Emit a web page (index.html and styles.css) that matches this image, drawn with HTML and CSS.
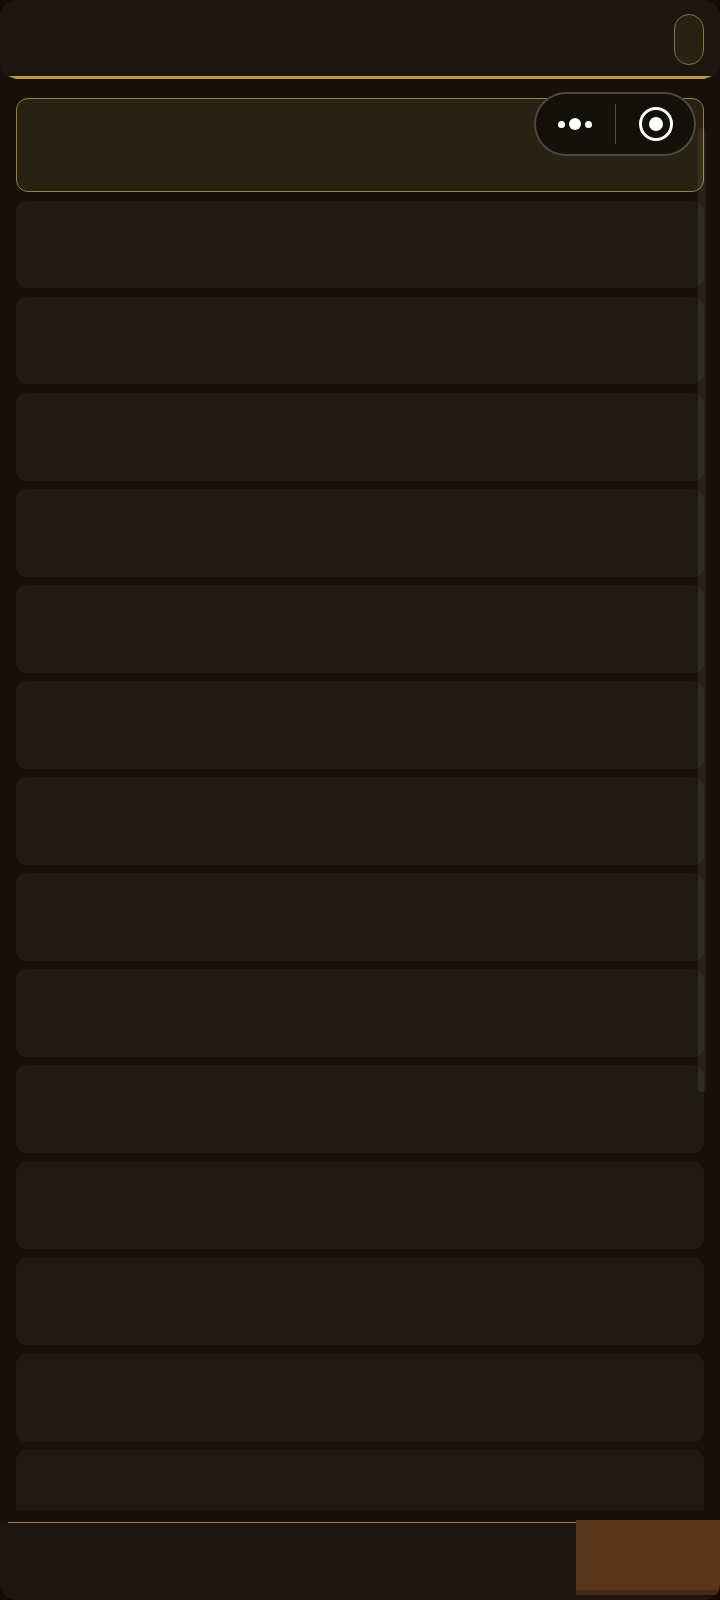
FILE: index.html
```html
<!DOCTYPE html>
<html lang="en">
<head>
    <meta charset="UTF-8">
    <meta name="viewport" content="width=device-width, initial-scale=1.0">
    <title>List</title>
    <link rel="stylesheet" href="styles.css">
</head>
<body>
<div class="page">
    <header class="top-bar">
        <div class="top-toggle"></div>
    </header>

    <div class="capsule">
        <div class="capsule-more">
            <span class="dot"></span>
            <span class="dot dot-large"></span>
            <span class="dot"></span>
        </div>
        <div class="capsule-divider"></div>
        <div class="capsule-close">
            <span class="close-inner"></span>
        </div>
    </div>

    <main class="list">
        <div class="card card-active"></div>
        <div class="card"></div>
        <div class="card"></div>
        <div class="card"></div>
        <div class="card"></div>
        <div class="card"></div>
        <div class="card"></div>
        <div class="card"></div>
        <div class="card"></div>
        <div class="card"></div>
        <div class="card"></div>
        <div class="card"></div>
        <div class="card"></div>
        <div class="card"></div>
        <div class="card"></div>
        <div class="scroll-thumb"></div>
    </main>

    <footer class="bottom-bar">
        <div class="bottom-action"></div>
    </footer>
</div>
</body>
</html>
```

FILE: styles.css
```css
:root {
    --page: #19100b;
    --bar: #1d1610;
    --card: #201b15;
    --card-active: #282214;
    --gold: #bc9a40;
    --gold-soft: #9c8138;
    --action: #5a3519;
}

* {
    margin: 0;
    padding: 0;
    box-sizing: border-box;
}

body {
    background-color: #0f0c09;
    width: 720px;
    height: 1600px;
    overflow: hidden;
}

.page {
    position: relative;
    display: flex;
    flex-direction: column;
    height: 1600px;
    background-color: var(--page);
    border-radius: 16px;
    overflow: hidden;
}

.top-bar {
    position: relative;
    display: flex;
    justify-content: flex-end;
    align-items: flex-start;
    flex-shrink: 0;
    height: 79px;
    padding: 14px 16px 0 0;
    background-color: var(--bar);
    border-radius: 0 0 16px 16px;
}

/* gold rule under the bar, pointed at both ends */
.top-bar::after {
    content: "";
    position: absolute;
    left: 8px;
    right: 8px;
    bottom: 0;
    height: 3px;
    background-color: var(--gold);
    clip-path: polygon(0 0, 100% 0, calc(100% - 8px) 100%, 8px 100%);
}

.top-toggle {
    width: 30px;
    height: 51px;
    background-color: #2a2114;
    border: 1.5px solid #8f7433;
    border-radius: 15px;
}

.capsule {
    position: absolute;
    top: 92px;
    left: 534px;
    z-index: 2;
    display: flex;
    align-items: center;
    width: 162px;
    height: 64px;
    background-color: #14100a;
    border: 2px solid rgba(226, 216, 190, 0.28);
    border-radius: 32px;
}

.capsule-more {
    display: flex;
    justify-content: center;
    align-items: center;
    gap: 4px;
    width: 77px;
    margin-right: 2px;
}

.dot {
    width: 7px;
    height: 7px;
    background-color: #fff;
    border-radius: 50%;
}

.dot-large {
    width: 12px;
    height: 12px;
}

.capsule-divider {
    width: 1px;
    height: 40px;
    background-color: rgba(255, 255, 255, 0.25);
}

.capsule-close {
    display: flex;
    justify-content: center;
    align-items: center;
    width: 34px;
    height: 34px;
    margin-left: 23px;
    border: 3px solid #fff;
    border-radius: 50%;
}

.close-inner {
    width: 14px;
    height: 14px;
    background-color: #fff;
    border-radius: 50%;
}

.list {
    position: relative;
    display: flex;
    flex-direction: column;
    gap: 8.3px;
    flex: 1;
    min-height: 0;
    margin-top: 19px;
    margin-bottom: 12px;
    padding: 0 16px;
    overflow: hidden;
}

.card {
    flex-shrink: 0;
    height: 87.8px;
    background-color: var(--card);
    border-radius: 10px;
}

.card-active {
    height: 94px;
    margin-bottom: 0.3px;
    background-color: var(--card-active);
    border: 1.5px solid var(--gold-soft);
    border-radius: 12px;
}

.scroll-thumb {
    position: absolute;
    top: 30px;
    right: 14px;
    width: 8px;
    height: 964px;
    background-color: rgba(255, 255, 255, 0.07);
    border-radius: 4px;
}

.bottom-bar {
    position: relative;
    flex-shrink: 0;
    height: 78px;
    background-color: var(--bar);
    border-radius: 16px 16px 16px 16px / 4px 4px 16px 16px;
}

.bottom-bar::before {
    content: "";
    position: absolute;
    top: 0;
    left: 8px;
    right: 0;
    height: 1px;
    background-color: #9a8346;
}

.bottom-action {
    position: absolute;
    top: -2px;
    right: 0;
    width: 144px;
    height: 75px;
    background-color: var(--action);
    border-bottom: 5px solid #432916;
}
```
